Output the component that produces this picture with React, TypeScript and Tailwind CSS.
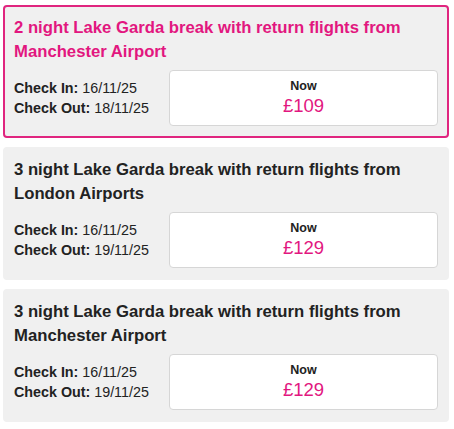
import React from "react";

type Deal = {
  title: string;
  checkIn: string;
  checkOut: string;
  price: string;
  active?: boolean;
};

const deals: Deal[] = [
  {
    title: "2 night Lake Garda break with return flights from Manchester Airport",
    checkIn: "16/11/25",
    checkOut: "18/11/25",
    price: "£109",
    active: true,
  },
  {
    title: "3 night Lake Garda break with return flights from London Airports",
    checkIn: "16/11/25",
    checkOut: "19/11/25",
    price: "£129",
  },
  {
    title: "3 night Lake Garda break with return flights from Manchester Airport",
    checkIn: "16/11/25",
    checkOut: "19/11/25",
    price: "£129",
  },
];

function Card({ d }: { d: Deal }) {
  return (
    <div
      className={
        d.active
          ? "rounded-[4px] border-2 border-[#e0257f] bg-[#f0f0f0] pl-[9px] pr-[9px] pt-[9px] pb-[10px]"
          : "rounded-[4px] border-2 border-[#f0f0f0] bg-[#f0f0f0] pl-[9px] pr-[9px] pt-[9px] pb-[10px]"
      }
    >
      <div
        className={
          d.active
            ? "text-[16.7px] font-bold leading-[24px] text-[#e2177f]"
            : "text-[16.7px] font-bold leading-[24px] text-[#222222]"
        }
      >
        {d.title}
      </div>
      <div className="mt-[6px] flex items-center">
        <div className="w-[155px] shrink-0 text-[14.3px] leading-[20px] text-[#222222]">
          <div>
            <span className="font-bold">Check In:</span> {d.checkIn}
          </div>
          <div>
            <span className="font-bold">Check Out:</span> {d.checkOut}
          </div>
        </div>
        <div className="flex h-[56px] flex-1 flex-col items-center justify-center rounded-[4px] border border-[#d6d6d6] bg-white">
          <div className="text-[12.5px] font-bold leading-[16px] text-[#222222]">Now</div>
          <div className="text-[18.5px] leading-[24px] text-[#e2177f]">{d.price}</div>
        </div>
      </div>
    </div>
  );
}

export default function App() {
  return (
    <div
      className="flex w-[454px] flex-col gap-[9px] bg-white pl-[3px] pr-[5px] pt-[5px]"
      style={{ fontFamily: '"Liberation Sans", Arial, sans-serif' }}
    >
      {deals.map((d, i) => (
        <Card key={i} d={d} />
      ))}
    </div>
  );
}
